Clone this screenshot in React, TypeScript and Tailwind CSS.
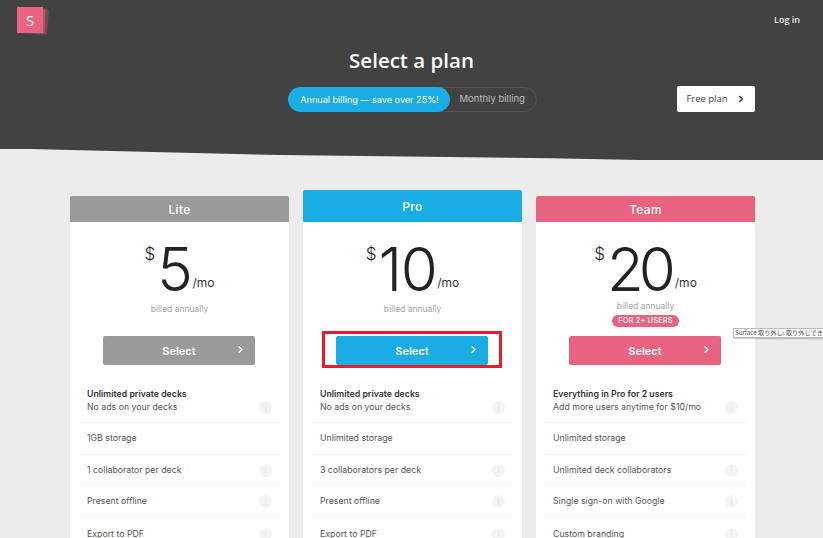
import React from 'react';
import { ChevronRight } from 'lucide-react';

interface Feature {
  title?: string;
  label: string;
  info?: boolean;
}

interface Plan {
  name: string;
  price: string;
  headerClass: string;
  buttonClass: string;
  priceClass: string;
  featured?: boolean;
  badge?: string;
  features: Feature[];
}

const plans: Plan[] = [
  {
    name: 'Lite',
    price: '5',
    headerClass: 'bg-[#9a9a9a] h-[26px]',
    buttonClass: 'bg-[#9a9a9a]',
    priceClass: 'tracking-[-1.5px]',
    features: [
      { title: 'Unlimited private decks', label: 'No ads on your decks', info: true },
      { label: '1GB storage' },
      { label: '1 collaborator per deck', info: true },
      { label: 'Present offline', info: true },
      { label: 'Export to PDF', info: true },
    ],
  },
  {
    name: 'Pro',
    price: '10',
    headerClass: 'bg-[#1aade3] h-[32px]',
    buttonClass: 'bg-[#1aade3]',
    priceClass: 'tracking-[-1.5px]',
    featured: true,
    features: [
      { title: 'Unlimited private decks', label: 'No ads on your decks', info: true },
      { label: 'Unlimited storage' },
      { label: '3 collaborators per deck', info: true },
      { label: 'Present offline', info: true },
      { label: 'Export to PDF', info: true },
    ],
  },
  {
    name: 'Team',
    price: '20',
    headerClass: 'bg-[#e8637f] h-[26px]',
    buttonClass: 'bg-[#e8637f]',
    priceClass: 'tracking-[-5px] mr-[3px]',
    badge: 'FOR 2+ USERS',
    features: [
      { title: 'Everything in Pro for 2 users', label: 'Add more users anytime for $10/mo', info: true },
      { label: 'Unlimited storage' },
      { label: 'Unlimited deck collaborators', info: true },
      { label: 'Single sign-on with Google', info: true },
      { label: 'Custom branding', info: true },
    ],
  },
];

const InfoDot = () => (
  <span className="flex h-[13px] w-[13px] shrink-0 items-center justify-center rounded-full bg-[#f4f4f4] text-[8px] font-bold leading-none text-[#e6e6e6]">
    i
  </span>
);

const PlanCard = ({ plan }: { plan: Plan }) => (
  <div className="w-[219px] shrink-0">
    <div
      className={`${plan.headerClass} flex items-center justify-center rounded-t-[2px] pt-[1px] font-['Inter',sans-serif] text-[12px] font-medium tracking-[0.3px] text-white`}
    >
      {plan.name}
    </div>
    <div className="h-[400px] bg-white px-[9px]">
      <div className="flex h-[80px] items-start justify-center pt-[18px] font-['Inter',sans-serif] text-[#222]">
        <span className="mt-[3px] mr-[2px] text-[17px] font-light leading-[22px]">$</span>
        <span className={`${plan.priceClass} mt-[3px] text-[60px] font-light leading-[52px]`}>{plan.price}</span>
        <span className="mt-[35px] ml-[1px] text-[12px] leading-[16px] text-[#333]">/mo</span>
      </div>
      <div className="flex h-[32px] flex-col items-center font-['Inter',sans-serif]">
        <span className={`${plan.badge ? '-mt-[3px]' : 'mt-0'} text-[8.5px] leading-[14px] text-[#a3a3a3]`}>billed annually</span>
        {plan.badge && (
          <span className="mt-[2px] flex h-[12px] items-center rounded-full bg-[#e8637f] px-[6px] text-[7.5px] font-medium tracking-[0.1px] text-white">
            {plan.badge}
          </span>
        )}
      </div>
      <div className="relative ml-[24px] mt-[2px] w-[152px]">
        <button
          className={`${plan.buttonClass} relative flex h-[29px] w-full items-center justify-center rounded-[2px] pt-[1px] font-['Inter',sans-serif] text-[11px] font-semibold text-white`}
        >
          Select
          <ChevronRight size={11} strokeWidth={3} className="absolute right-[9px] top-[8px]" />
        </button>
        {plan.featured && (
          <div className="pointer-events-none absolute -left-[14px] -top-[5px] h-[37px] w-[180px] border-[3px] border-[#e81c2c]" />
        )}
      </div>
      <ul className="mt-[21px] font-['Inter',sans-serif] text-[8.75px] text-[#555]">
        {plan.features.map((feature, index) => (
          <li
            key={index}
            className={`flex items-center justify-between pl-[8px] pr-[8px] ${index === 0 ? 'h-[37px] items-end pb-[8px]' : 'h-[31.6px] pt-[1px]'} ${index < plan.features.length - 1 ? 'border-b border-[#f1f1f1]' : ''}`}
          >
            <span className="leading-[13px]">
              {feature.title && <span className="block font-semibold text-[#333]">{feature.title}</span>}
              {feature.label}
            </span>
            {feature.info && <InfoDot />}
          </li>
        ))}
      </ul>
    </div>
  </div>
);

const App: React.FC = () => {
  return (
    <div className="relative h-[538px] w-[823px] overflow-hidden bg-[#ececec]">
      <div className="relative h-[160px] bg-[#424242]">
        {/* sloped bottom edge of the header */}
        <svg className="absolute bottom-0 left-0" width="823" height="12" viewBox="0 0 823 12">
          <polygon points="0,1 30,1 280,7 550,10.3 640,12 0,12" fill="#ececec" />
        </svg>
        <div className="relative flex items-start justify-between pl-[17px] pr-[23px] pt-[6px]">
          <div className="relative mt-[1px] h-[26px] w-[28px]">
            <div className="absolute left-[5px] top-[2px] h-[25px] w-[26px] rotate-[4deg] bg-[#e8637f]/30" />
            <div className="absolute left-[2px] top-[1px] h-[25px] w-[26px] rotate-[2deg] bg-[#e8637f]/50" />
            <div className="absolute left-0 top-0 flex h-[26px] w-[26px] items-center justify-center bg-[#e8637f] font-['Open_Sans',sans-serif] text-[15px] font-medium text-white">
              S
            </div>
          </div>
          <span className="mt-[7px] font-['Open_Sans',sans-serif] text-[9px] font-semibold leading-[14px] text-[#f0f0f0]">Log in</span>
        </div>
        <h1 className="mt-[13px] text-center font-['Open_Sans',sans-serif] text-[20.5px] font-semibold leading-[28px] text-white">
          Select a plan
        </h1>
        <div className="relative mt-[13px] flex justify-center">
          <div className="ml-[1px] flex h-[25px] w-[249px] items-center rounded-full border border-[#555] font-['Inter',sans-serif]">
            <span className="-ml-px flex h-[25px] w-[162px] items-center justify-center whitespace-nowrap rounded-full bg-[#1aade3] pl-[2px] text-[9.1px] text-white">
              Annual billing — save over 25%!
            </span>
            <span className="flex-1 whitespace-nowrap pl-[10px] text-[9.5px] text-[#bdbdbd]">Monthly billing</span>
          </div>
          <button className="absolute left-[677px] -top-[1px] flex h-[26px] w-[78px] items-center justify-center gap-[8px] rounded-[2px] bg-white font-['Open_Sans',sans-serif] text-[9.5px] text-[#444]">
            Free plan
            <ChevronRight size={10} strokeWidth={3.5} className="text-[#333]" />
          </button>
        </div>
      </div>
      <div className="mt-[30px] flex items-end justify-start gap-[14px] pl-[70px]">
        {plans.map(plan => (
          <PlanCard key={plan.name} plan={plan} />
        ))}
      </div>
      <div className="absolute left-[733px] top-[328px] w-[100px] whitespace-nowrap border border-[#bbb] bg-[#fbfbfb] px-[1px] font-['Noto_Sans_CJK_JP',sans-serif] text-[6.2px] leading-[8px] text-[#555] shadow-[1px_1px_1px_rgba(0,0,0,0.2)]">
        Surface 取り外し: 取り外しでき
      </div>
    </div>
  );
};

export default App;
